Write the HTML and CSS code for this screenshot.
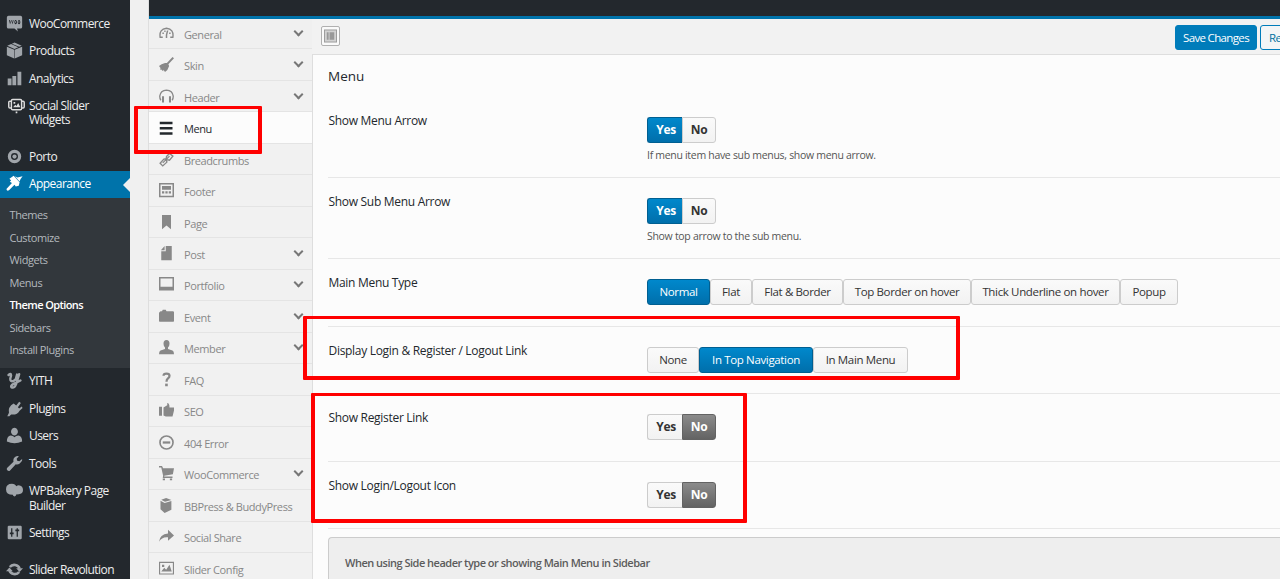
FILE: index.html
```html
<!DOCTYPE html>
<html lang="en">
<head>
    <meta charset="UTF-8">
    <meta name="viewport" content="width=device-width, initial-scale=1.0">
    <title>Theme Options</title>
    <link rel="stylesheet" href="styles.css">
</head>
<body>
    <nav class="admin-menu">
        <a class="admin-item"><svg viewBox="0 0 20 20"><path fill-rule="evenodd" d="M3 1h14q2 0 2 2v11q0 2-2 2h-4l1 3.500-4-3.500H3q-2 0-2-2V3q0-2 2-2zM3.500 6l1.300 5L6.300 7l1.500 4L9 6l-1 .1-.7 3L6.400 6H6l-1 3L4.500 6zM11.300 6a1.500 2.500 0 1 0 .1 0zm0 1.200a.5 1 0 1 1-.1 0zM15.300 6a1.500 2.500 0 1 0 .1 0zm0 1.200a.5 1 0 1 1-.1 0z"/></svg><span>WooCommerce</span></a>
        <a class="admin-item"><svg viewBox="0 0 20 20"><path d="M10 .5l8.500 4-3 1.200L7 2zM6 2.400l8.500 3.800L10 8.200 1.500 4.500zM1 5.500l8.700 3.700V19.500L1 15.500zM19 5.500l-8.700 3.700V19.500l8.700-4z"/></svg><span>Products</span></a>
        <a class="admin-item"><svg viewBox="0 0 20 20"><path d="M2 10h4.500v8H2zM7.500 7H12v11H7.500zM13.500 2H18v16h-4.500z"/></svg><span>Analytics</span></a>
        <a class="admin-item"><svg class="slider-icon" viewBox="0 0 20 20"><path fill="none" stroke="currentColor" stroke-width="1.700" d="M5.500 3h9q1.500 0 1.500 1.500v9q0 1.500-1.500 1.500h-9Q4 15 4 13.500v-9Q4 3 5.500 3zM3.500 5H2.300Q.9 5 .9 6.500v5Q.9 13 2.300 13h1.200M16.500 5h1.200q1.400 0 1.400 1.500v5q0 1.500-1.400 1.500h-1.200"/><path d="M6 12l2.500-3 1.500 1.500L12 7l2.500 5zM6.500 6h2v2h-2zM9 17h2v2H9z"/></svg><span>Social Slider<br>Widgets</span></a>
        <div class="separator"></div>
        <a class="admin-item"><svg viewBox="0 0 20 20"><circle cx="10" cy="10" r="6" fill="none" stroke="currentColor" stroke-width="3.800"/><circle cx="10" cy="10" r="2.500"/></svg><span>Porto</span></a>
        <a class="admin-item current"><svg viewBox="0 0 20 20"><path d="M4 4.500L9 1l7 7.500-1 4-3.500 1L10 11.500 3.500 18q-2.500 1.500-3-1.500L7 9.500 4.500 8 6 6.500zM10.500 1.500l3 1.500L19.500 1.500 17 5l-1 2.500z"/></svg><span>Appearance</span></a>
        <div class="submenu">
            <a>Themes</a>
            <a>Customize</a>
            <a>Widgets</a>
            <a>Menus</a>
            <a class="selected">Theme Options</a>
            <a>Sidebars</a>
            <a>Install Plugins</a>
        </div>
        <a class="admin-item"><svg viewBox="0 0 20 20"><path fill="none" stroke="currentColor" stroke-width="2.800" stroke-linecap="round" d="M3 3.500q3-2.500 3 .5L5 8q0 4 4 2.500l2.500-2L13 3M15.500 2.500L12 14q-2 5.500-5.500 4-1.500-2 2.500-4l8-4"/></svg><span>YITH</span></a>
        <a class="admin-item"><svg viewBox="0 0 20 20"><path d="M9 4l3 2.500L15.500 2 17.500 3.500l-3.500 5 1.500 1.500 3-2.500L19.500 9.500l-3.500 3q-3 5.500-10 4.500L4 19H1.500l2-4Q2 8 9 4z"/></svg><span>Plugins</span></a>
        <a class="admin-item"><svg viewBox="0 0 20 20"><path d="M10 1a4 4.500 0 1 1-.1 0zM5 10q2.500 0 3.500.8L10 12l1.500-1.200q1-.8 3.500-.8 4 1 4 7-9 4-18 0 0-6 4-7z"/></svg><span>Users</span></a>
        <a class="admin-item"><svg viewBox="0 0 20 20"><path d="M17.500 8.500q-2.500 3.500-6 2.500l-7 7.500q-1.500 1-3-.5t0-3L8.800 8Q8 4 11 2q2-1.200 4.200-.5L12.500 4.300l.7 2.500 2.500.6 3.300-2.800Q19.500 7 17.500 8.500z"/></svg><span>Tools</span></a>
        <a class="admin-item"><svg viewBox="0 0 20 20"><path d="M7 2q4 0 5 3 2-1.500 4-1 4 1 4 5.500t-5 5l-3 .2q0 2-2 2.300-2-.5-2-2Q0 15 0 8.500 0 2 7 2z"/></svg><span>WPBakery Page<br>Builder</span></a>
        <a class="admin-item"><svg viewBox="0 0 20 20"><path fill-rule="evenodd" d="M3 2h14.500l1 1v14l-1 1H3l-1-1V3zM6 5v5H4.500v2H6v3h1.500v-3H9v-2H7.500V5zM12.500 5v1.500H11v2h1.500V15H14V8.500h1.500v-2H14V5z"/></svg><span>Settings</span></a>
        <div class="separator"></div>
        <a class="admin-item"><svg viewBox="0 0 20 20"><path fill="none" stroke="currentColor" stroke-width="3" d="M4.500 7a6.500 6 0 0 1 11.500 2M15.500 13a6.500 6 0 0 1-11.500-2"/><path d="M0 12h8L4 7.500zM12 8.500h8L16 13z"/></svg><span>Slider Revolution</span></a>
    </nav>

    <main class="options">
        <div class="options-top"></div>
        <div class="options-body">
            <ul class="sections">
                <li class="arrow"><svg viewBox="0 0 20 20"><path fill="none" stroke="currentColor" stroke-width="1.800" d="M5 15H1.500Q0 4 10 3q10 1 8.500 12H15"/><path d="M4.500 8.500h2v2h-2zM7 6h1.800v2H7zM13.500 8.500h2v2h-2zM10.500 6h2L11 12v4H9v-4z"/></svg>General</li>
                <li class="arrow"><svg viewBox="0 0 20 20"><path d="M18 0l2 1.500-7.500 8 1 2.500q-1.500 5.500-5.500 8l-2-3-.5 2-2.500-2.500-1.500.5.500-2.500L0 12q3-3 8-4l2.500 0z"/></svg>Skin</li>
                <li class="arrow"><svg viewBox="0 0 20 20"><path fill="none" stroke="currentColor" stroke-width="1.800" d="M2.500 15Q1 13 1 9.500 2 2 10 1.500q8 .5 9 8 0 3.500-1.500 5.500"/><path d="M4 9.500h2.700V18H4zM13.300 9.500H16V18h-2.700z"/></svg>Header</li>
                <li class="active"><svg viewBox="0 0 20 20"><path d="M1 1h17v3.300H1zM1 8h17v3.300H1zM1 15h17v3.300H1z"/></svg>Menu</li>
                <li><svg viewBox="0 0 20 20"><path fill="none" stroke="currentColor" stroke-width="1.800" d="M10 6l4-4 4.500 3.500-4.500 5.500-4.500-1zM9.500 9l1 4.500-5.500 5L1.500 15l5-5.500zM5 14.500l9-9"/></svg>Breadcrumbs</li>
                <li><svg viewBox="0 0 20 20"><path fill-rule="evenodd" d="M0 0h20v19H0zM2 2v15h16V2zM4 4h12v5H4zM4 11h3v3H4zM8.500 11h3v3h-3zM13 11h3v3h-3z"/></svg>Footer</li>
                <li><svg viewBox="0 0 20 20"><path d="M4 0h12v19l-6-5-6 5z"/></svg>Page</li>
                <li class="arrow"><svg viewBox="0 0 20 20"><path d="M9 0h8v19H3V7h6zM7.500 0v5.500H2.500z"/></svg>Post</li>
                <li class="arrow"><svg viewBox="0 0 20 20"><path fill-rule="evenodd" d="M0 0h20v18H0zM2 2v11h16V2z"/></svg>Portfolio</li>
                <li class="arrow"><svg viewBox="0 0 20 20"><path d="M1 4l1-1h2l1-2h4l1 2h9l1 1v12q0 1-1 1H1q-1 0-1-1V5z"/></svg>Event</li>
                <li class="arrow"><svg viewBox="0 0 20 20"><path d="M10 0q4 0 4 5 0 3-2 5v2l6 2q2 1 2 5H0q0-4 2-5l6-2v-2Q6 8 6 5q0-5 4-5z"/></svg>Member</li>
                <li><svg viewBox="0 0 20 20"><path fill="none" stroke="currentColor" stroke-width="3" d="M6 5q0-3 4-3t4 3q0 2-2 3.500t-2 4.500"/><path d="M8.200 15.500h3.500V19H8.200z"/></svg>FAQ</li>
                <li><svg viewBox="0 0 20 20"><path d="M0 5h4v12H0zM6 6l5-3V0q3 0 3 6h6v4l-2 8H9l-3-1.500z"/></svg>SEO</li>
                <li><svg viewBox="0 0 20 20"><circle cx="10" cy="10" r="8.700" fill="none" stroke="currentColor" stroke-width="2.200"/><path d="M5 8.500h10v3H5z"/></svg>404 Error</li>
                <li class="arrow"><svg viewBox="0 0 20 20"><path d="M0 0h4l1.500 3H20l-1.500 8L7 13v1h11v2H5l.5-3L3 2H0zM5 16.500h3V19H5zM14.500 16.500h3V19h-3z"/></svg>WooCommerce</li>
                <li><svg viewBox="0 0 20 20"><path d="M7.500 6.500l9-2.500v11.500l-9 4.500L2 15V3.500zM3 2.300L9.500 0l7 2.800L8 5z"/></svg>BBPress &amp; BuddyPress</li>
                <li><svg viewBox="0 0 20 20"><path d="M0 17Q1 7 12 6V1l8 7.500-8 7V11Q4 10 0 17z"/></svg>Social Share</li>
                <li><svg viewBox="0 0 20 20"><path fill-rule="evenodd" d="M0 1h20v17H0zM1.500 2.500v14h17v-14zM3 14l4-5 2.500 2.500L14 5l3 9zM4 5h3v3H4z"/></svg>Slider Config</li>
            </ul>

            <section class="panel">
                <div class="toolbar">
                    <span class="expand"><svg viewBox="0 0 14 14"><path fill="#999" d="M0 0h14v14H0z"/><path fill="#d2d2d2" d="M1 1h12v12H1z"/><path fill="#999" d="M3 3h2v8H3zM6 3h5v8H6z"/></svg></span>
                    <div class="actions">
                        <button class="save">Save Changes</button>
                        <button class="reset">Reset Section</button>
                    </div>
                </div>
                <div class="fields">
                    <h2>Menu</h2>
                    <div class="field tall">
                        <label>Show Menu Arrow</label>
                        <div>
                            <div class="switch"><span class="btn on">Yes</span><span class="btn">No</span></div>
                            <p>If menu item have sub menus, show menu arrow.</p>
                        </div>
                    </div>
                    <div class="field tall">
                        <label>Show Sub Menu Arrow</label>
                        <div>
                            <div class="switch"><span class="btn on">Yes</span><span class="btn">No</span></div>
                            <p>Show top arrow to the sub menu.</p>
                        </div>
                    </div>
                    <div class="field">
                        <label>Main Menu Type</label>
                        <div class="buttonset menu-type"><span class="btn on">Normal</span><span class="btn">Flat</span><span class="btn">Flat &amp; Border</span><span class="btn">Top Border on hover</span><span class="btn">Thick Underline on hover</span><span class="btn">Popup</span></div>
                    </div>
                    <div class="field">
                        <label>Display Login &amp; Register / Logout Link</label>
                        <div class="buttonset login-link"><span class="btn">None</span><span class="btn on">In Top Navigation</span><span class="btn">In Main Menu</span></div>
                    </div>
                    <div class="field">
                        <label>Show Register Link</label>
                        <div class="switch"><span class="btn">Yes</span><span class="btn off">No</span></div>
                    </div>
                    <div class="field">
                        <label>Show Login/Logout Icon</label>
                        <div class="switch"><span class="btn">Yes</span><span class="btn off">No</span></div>
                    </div>
                    <div class="info">When using Side header type or showing Main Menu in Sidebar</div>
                </div>
            </section>
        </div>
    </main>

    <div class="mark mark-menu"></div>
    <div class="mark mark-login"></div>
    <div class="mark mark-icons"></div>
</body>
</html>
```
FILE: styles.css
```css
* {
    box-sizing: border-box;
}

body {
    position: relative;
    display: flex;
    width: 1280px;
    height: 579px;
    margin: 0;
    overflow: hidden;
    background-color: #f0f0f0;
    color: #23282d;
    font-family: "Open Sans", "Noto Sans", sans-serif;
    font-size: 12px;
}

/* admin menu */
.admin-menu {
    flex: none;
    width: 130px;
    height: 579px;
    padding-top: 10px;
    overflow: hidden;
    background-color: #23282d;
}

.admin-item {
    position: relative;
    display: flex;
    gap: 6px;
    padding: 6.650px 0 6.650px 6px;
    color: #eee;
    font-size: 12px;
    line-height: 14.200px;
    letter-spacing: -0.55px;
    white-space: nowrap;
}

.admin-item svg {
    flex: none;
    width: 17px;
    height: 17px;
    margin: -2px 0 -2px;
    color: #a0a5aa;
    fill: currentColor;
}

.admin-item .slider-icon {
    margin-left: 2px;
    margin-right: -2px;
    color: #ddd;
}

.separator {
    height: 9.200px;
}

.admin-item.current {
    background-color: #0073aa;
    color: #fff;
}

.admin-item.current svg {
    color: #fff;
}

.current::after {
    content: "";
    position: absolute;
    right: 0;
    top: 7px;
    border: 7px solid transparent;
    border-left: 0;
    border-right: 7px solid #f0f0f0;
}

.submenu {
    padding: 6px 0 6px 9.500px;
    background-color: #32373c;
}

.submenu a {
    display: block;
    color: #b4b9be;
    font-size: 11px;
    line-height: 22.500px;
    letter-spacing: -0.4px;
}

.submenu .selected {
    color: #fff;
    font-weight: 600;
    letter-spacing: -0.6px;
}

/* options panel */
.options {
    flex: none;
    width: 1132px;
    height: 579px;
    margin-left: 18px;
    overflow: hidden;
    border-left: 1px solid #dedede;
}

.options-top {
    height: 19px;
    margin-left: -1px;
    background-color: #23282d;
    border-bottom: 3px solid #0073aa;
}

.options-body {
    display: flex;
}

.sections {
    flex: none;
    width: 163px;
    margin: -1px 0 0;
    padding: 0;
    list-style: none;
}

.sections li {
    display: flex;
    align-items: center;
    gap: 10px;
    height: 31.480px;
    padding: 2px 0 0 10px;
    border-bottom: 1px solid #e4e4e4;
    background-color: #f1f1f1;
    color: #888;
    font-size: 11px;
    letter-spacing: -0.4px;
    white-space: nowrap;
}

.sections li:first-child {
    background-color: transparent;
}

.sections svg {
    flex: none;
    width: 15px;
    height: 15px;
    margin-top: -2px;
    fill: currentColor;
}

.sections .active {
    background-color: #fcfcfc;
    color: #23282d;
}

.sections .active svg {
    margin-top: 0;
}

.arrow::after {
    content: "";
    width: 5px;
    height: 5px;
    margin: -6px 10px 0 auto;
    border: solid #777;
    border-width: 0 2px 2px 0;
    transform: rotate(45deg);
}

.panel {
    width: 968px;
    height: 560px;
}

.toolbar {
    display: flex;
    justify-content: space-between;
    height: 36px;
    padding: 7px 0 0 9px;
    border-bottom: 1px solid #dedede;
    background-color: #f2f2f2;
}

.expand {
    width: 19px;
    height: 20px;
    padding: 2px;
    border: 1px solid #b0b0b0;
    border-radius: 2px;
    background-color: #fafafa;
}

.expand svg {
    display: block;
    width: 13px;
    height: 14px;
}

.actions {
    display: flex;
    gap: 3px;
    width: 105px;
    margin-top: -1px;
}

.actions button {
    flex: none;
    height: 25px;
    padding: 0;
    border: 1px solid #007cba;
    border-radius: 3px;
    font-family: inherit;
    font-size: 11.500px;
    letter-spacing: -0.65px;
    white-space: nowrap;
}

.save {
    width: 82px;
    background-color: #007cba;
    color: #fff;
}

.actions .reset {
    width: 90px;
    padding-left: 8px;
    background-color: #f3f5f6;
    color: #0071a1;
    text-align: left;
}

.fields {
    height: 524px;
    padding: 12px 0 0 15px;
    border-left: 1px solid #dedede;
    background-color: #fcfcfc;
}

h2 {
    height: 30px;
    margin: 0;
    font-size: 13.500px;
    font-weight: 400;
    line-height: 19px;
}

.field {
    display: grid;
    grid-template-columns: 319px 1fr;
    height: 67.500px;
    padding-top: 20px;
    border-bottom: 1px solid #e7e7e7;
}

.tall {
    height: 81.200px;
}

label {
    padding-left: 0.5px;
    font-size: 12px;
    line-height: 8px;
    letter-spacing: -0.3px;
}

.field p {
    margin: 5px 0 0;
    color: #555;
    font-size: 10.500px;
    line-height: 15px;
    letter-spacing: -0.3px;
}

.switch,
.buttonset {
    display: grid;
    height: 26px;
}

.switch {
    grid-template-columns: 35px 34px;
}

.menu-type {
    grid-template-columns: 63px 42px 91px 128px 149px 58px;
}

.login-link {
    grid-template-columns: 52px 114px 95px;
}

.btn {
    border: 1px solid #ccc;
    border-radius: 3px;
    background: linear-gradient(#fafafa, #f2f2f2);
    color: #333;
    font-size: 11.500px;
    line-height: 24px;
    letter-spacing: -0.35px;
    text-align: center;
    white-space: nowrap;
}

.btn.on {
    border-color: #005f91;
    background: linear-gradient(#0088cc, #006fab);
    color: #fff;
}

.switch .btn {
    font-size: 12px;
    font-weight: 700;
}

.switch .btn:first-child {
    padding-left: 2px;
    border-right: 0;
    border-radius: 3px 0 0 3px;
}

.switch .btn:last-child {
    border-radius: 0 3px 3px 0;
}

.btn.off {
    border-color: #636363;
    background: linear-gradient(#8b8b8b, #636363);
    color: #fff;
}

.info {
    height: 70px;
    margin-top: 8px;
    padding: 17px 16px;
    border: 1px solid #ccc;
    border-right: 0;
    border-radius: 4px 0 0 0;
    background-color: #eee;
    color: #5c5c5c;
    font-size: 11px;
    font-weight: 600;
    letter-spacing: -0.5px;
}

/* red highlights over the page */
.mark {
    position: absolute;
    border: 4px solid #f00;
    border-top-width: 3px;
    border-radius: 1px;
}

.mark-menu {
    left: 134px;
    top: 106px;
    width: 128px;
    height: 48px;
}

.mark-login {
    left: 303px;
    top: 316px;
    width: 657px;
    height: 64px;
}

.mark-icons {
    left: 311px;
    top: 393px;
    width: 436px;
    height: 130px;
}
```
